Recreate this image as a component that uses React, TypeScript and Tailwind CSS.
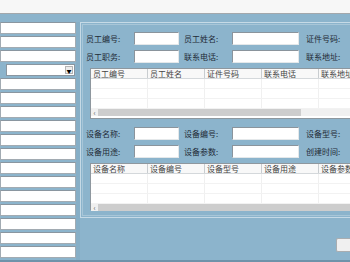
import React from 'react';

const font = { fontFamily: '"Noto Sans CJK SC", "Noto Sans", sans-serif' };

const Field: React.FC<{ label: string; wide?: boolean }> = ({ label, wide }) => (
    <div className="flex items-center">
        <span className="w-[48px] text-[8px] leading-none text-[#1e2a36] whitespace-nowrap">{label}</span>
        <div className={`h-[13px] bg-white border border-[#8a949c] border-b-[#e4e8ea] border-r-[#e4e8ea] ${wide ? 'w-[67px]' : 'w-[45px]'}`} />
    </div>
);

const FieldRow: React.FC<{ labels: string[] }> = ({ labels }) => (
    <div className="flex items-center h-[13px]">
        <Field label={labels[0]} />
        <div className="w-[5px]" />
        <Field label={labels[1]} wide />
        <span className="ml-[7px] text-[8px] leading-none text-[#1e2a36] whitespace-nowrap">{labels[2]}</span>
    </div>
);

const Grid: React.FC<{ cols: string[]; height: string; thumb: string }> = ({ cols, height, thumb }) => (
    <div className={`ml-[4px] flex flex-col bg-white border border-[#8e979e] border-r-0 ${height}`}>
        <div className="flex h-[10px] bg-[#f8f8f8] border-b border-[#d4d8db]">
            {cols.map((c) => (
                <div key={c} className="w-[57px] shrink-0 border-r border-[#c9cdd0] pl-[2px] text-[8px] leading-[10px] text-[#444] whitespace-nowrap overflow-hidden">
                    {c}
                </div>
            ))}
        </div>
        <div className="flex-1 flex flex-col">
            {[0, 1, 2].map((r) => (
                <div key={r} className="flex h-[10px] border-b border-[#f2f2f2]">
                    {cols.map((c) => (
                        <div key={c} className="w-[57px] shrink-0 border-r border-[#f0f0f0]" />
                    ))}
                </div>
            ))}
        </div>
        <div className="flex h-[8px] bg-[#f0f0f0] items-center">
            <span className="w-[7px] text-[7px] leading-none text-[#555] text-center">‹</span>
            <div className={`h-[7px] bg-[#cdcdcd] ${thumb}`} />
        </div>
        <div className="h-[2px] bg-white" />
    </div>
);

export default function App() {
    return (
        <div className="w-[350px] h-[262px] overflow-hidden bg-[#8cb4cc] flex flex-col" style={font}>
            <div className="h-[14px] shrink-0 bg-[#f7f7f7] border-b border-[#a3a8ac]" />
            <div className="flex flex-1 min-h-0 pt-[8px]">
                {/* left list */}
                <div className="w-[76px] shrink-0 flex flex-col gap-[2px]">
                    {[0, 1, 2].map((i) => (
                        <div key={i} className="h-[12px] bg-white border border-[#a2abb2] border-t-[#8a96a0]" />
                    ))}
                    <div className="h-[12px] flex">
                        <div className="w-[6px]" />
                        <div className="flex-1 bg-white border border-[#8a96a0] flex justify-end items-center pr-[1px]">
                            <div className="w-[8px] h-[8px] bg-[#ececec] border border-[#b4b4b4] flex items-center justify-center text-[5px] leading-none text-black">▼</div>
                        </div>
                        <div className="w-[1px]" />
                    </div>
                    {Array.from({ length: 13 }).map((_, i) => (
                        <div key={i} className="h-[12px] shrink-0 bg-white border border-[#a2abb2] border-t-[#8a96a0]" />
                    ))}
                </div>
                <div className="w-[4px] shrink-0 bg-[#86aec6]" />
                {/* right group */}
                <div className="flex-1 min-w-0 flex flex-col">
                    <div className="h-[196px] border-l border-t border-b border-[#c6dae6] pl-[1px] pt-[1px] pb-[1px]">
                        <div className="h-full border-l border-t border-b border-[#a8c6d8] pl-[3px] pt-[7px] flex flex-col">
                            <FieldRow labels={['员工编号:', '员工姓名:', '证件号码:']} />
                            <div className="h-[5px]" />
                            <FieldRow labels={['员工职务:', '联系电话:', '联系地址:']} />
                            <div className="h-[5px]" />
                            <Grid cols={['员工编号', '员工姓名', '证件号码', '联系电话', '联系地址']} height="h-[51px]" thumb="w-[203px]" />
                            <div className="h-[8px]" />
                            <FieldRow labels={['设备名称:', '设备编号:', '设备型号:']} />
                            <div className="h-[5px]" />
                            <FieldRow labels={['设备用途:', '设备参数:', '创建时间:']} />
                            <div className="h-[5px]" />
                            <Grid cols={['设备名称', '设备编号', '设备型号', '设备用途', '设备参数']} height="h-[47px]" thumb="flex-1" />
                        </div>
                    </div>
                    <div className="flex-1 flex justify-end items-start pt-[20px]">
                        <div className="w-[14px] h-[14px] bg-[#f0f0f0] border border-[#a9adb0] border-r-0 rounded-l-[2px]" />
                    </div>
                </div>
            </div>
            <div className="h-[2px] shrink-0 bg-[#6f93aa]" />
        </div>
    );
}
